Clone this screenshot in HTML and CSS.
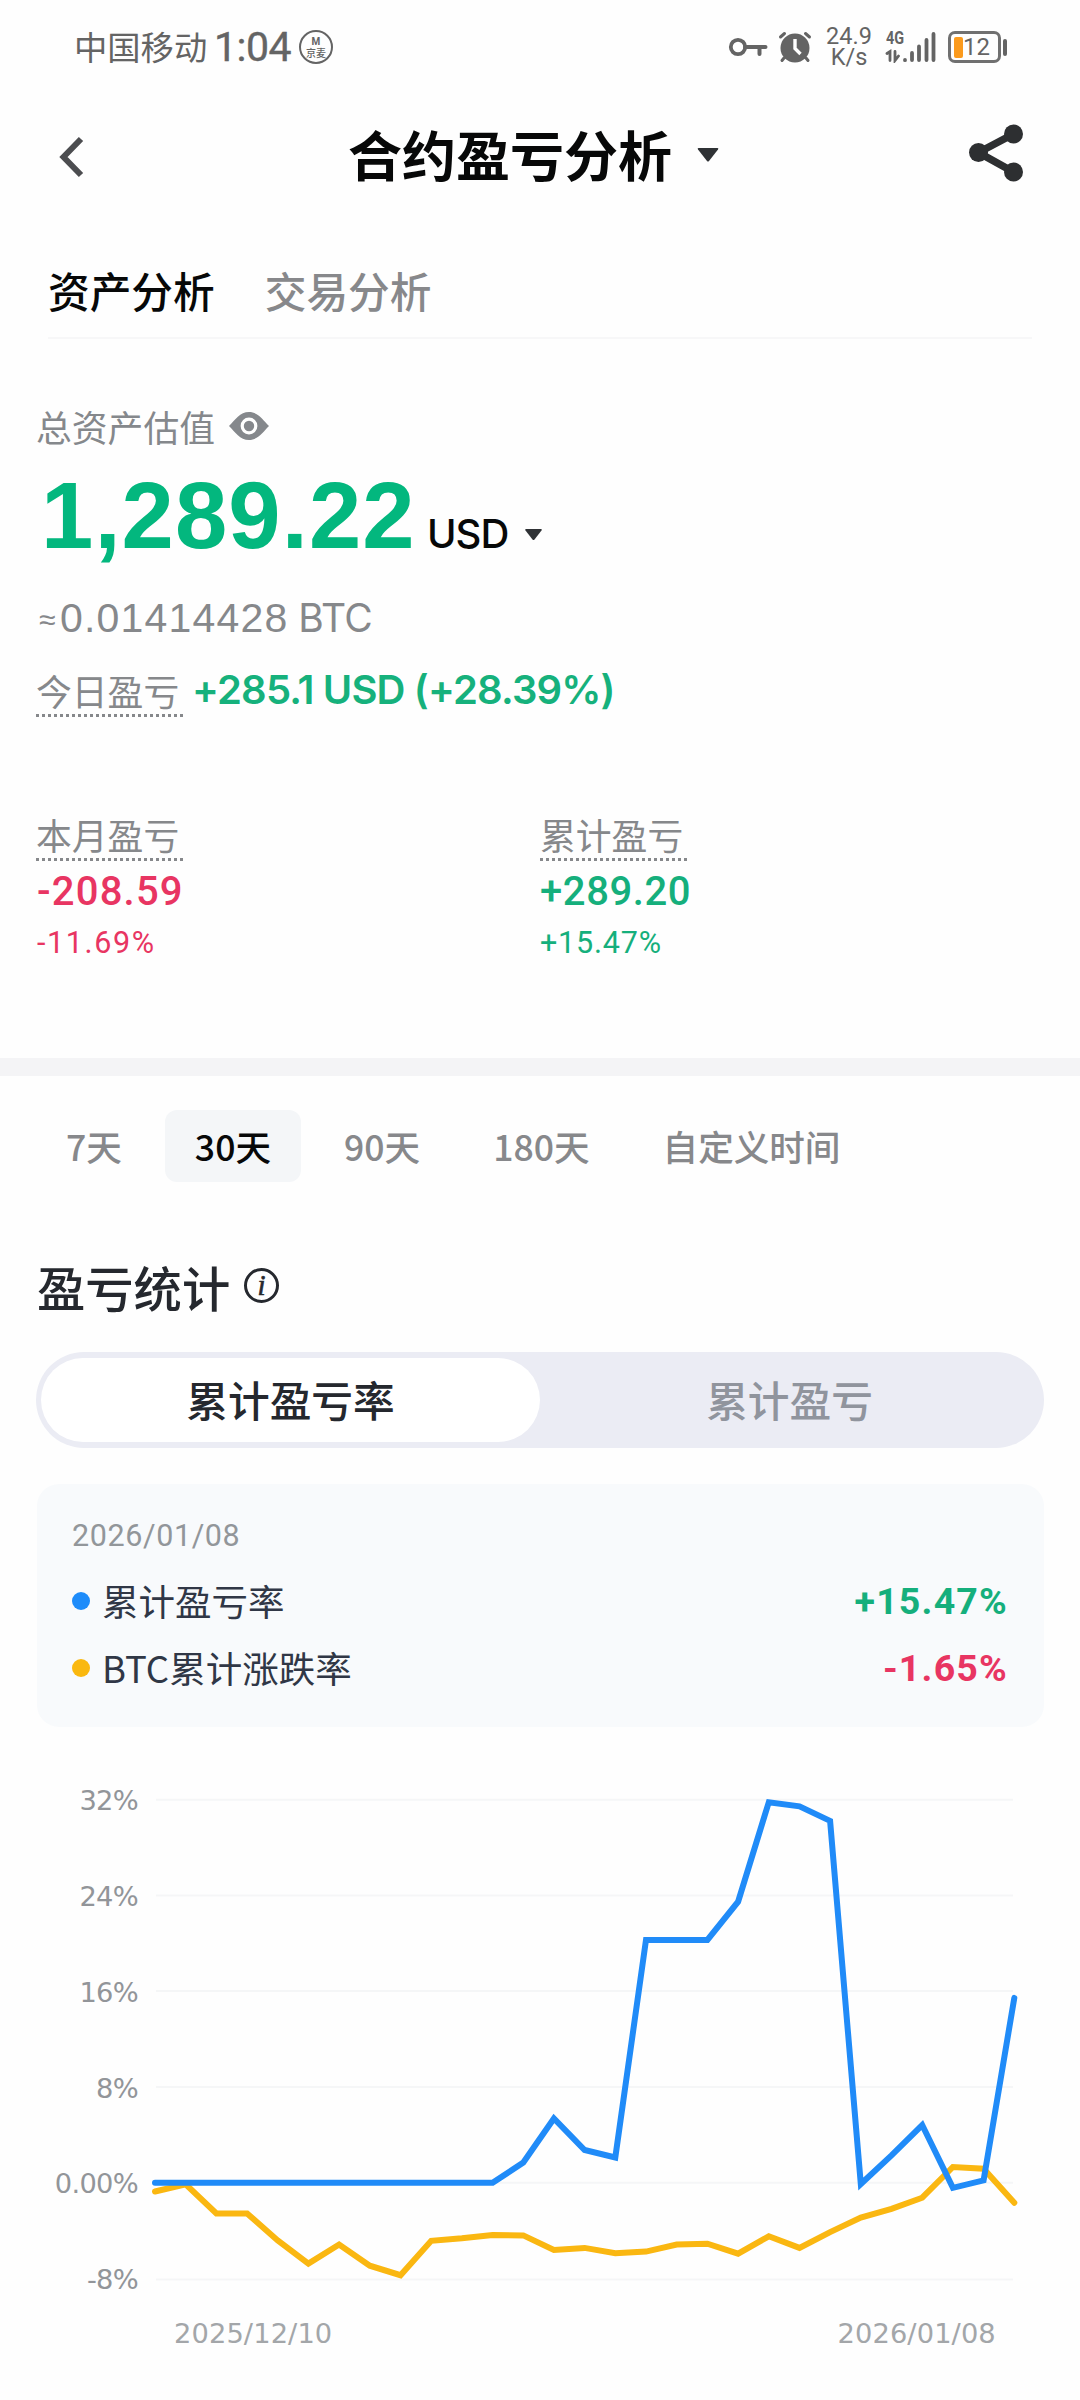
FILE: index.html
```html
<!DOCTYPE html>
<html lang="zh-CN">
<head>
<meta charset="utf-8">
<title>合约盈亏分析</title>
<link rel="stylesheet" href="styles.css">
</head>
<body>
<header class="status">
  <span class="carrier">中国移动</span>
  <span class="clock">1:04</span>
  <span class="badge"><span class="badge-top">M</span><span class="badge-name">京麦</span></span>
  <svg class="icon-key" width="40" height="22" viewBox="0 0 40 22" fill="none" stroke="#646464">
    <circle cx="10" cy="11" r="7.2" stroke-width="3.8"/>
    <path d="M17 11H37.500M31.500 11V18" stroke-width="4" stroke-linecap="round"/>
  </svg>
  <svg class="icon-alarm" width="34" height="32" viewBox="0 0 34 32">
    <circle cx="17" cy="17" r="14.500" fill="#646464"/>
    <path d="M2.500 6L6.500 2.500M31.500 6L27.500 2.500M6 27L4 29.500M28 27L30 29.500" stroke="#646464" stroke-width="3" stroke-linecap="round"/>
    <path d="M17 8V17.500L22.500 23" fill="none" stroke="#fff" stroke-width="3.400"/>
  </svg>
  <span class="speed"><span>24.9</span><span>K/s</span></span>
  <span class="network">
    <span class="network-type">4G</span>
    <svg class="icon-signal" width="52" height="32" viewBox="0 0 52 32" fill="none" stroke="#646464" stroke-width="3.800" stroke-linecap="round">
      <path d="M2 22.500L5 20.500V29.500M10 20.500V29.500L13.500 25" stroke-width="2.800"/>
      <path d="M20 29V29.200M27 22V29M34 15.500V29M41.500 9V29M48.500 3V29"/>
    </svg>
  </span>
  <span class="battery"><i class="battery-level"></i>12</span><i class="battery-cap"></i>
</header>

<nav class="topbar">
  <svg class="back" width="26" height="42" viewBox="0 0 26 42" fill="none" stroke="#4c4d50" stroke-width="6"><path d="M23 3L5.500 21L23 39"/></svg>
  <h1 class="title">合约盈亏分析</h1>
  <svg class="title-caret" width="24" height="16" viewBox="0 0 24 16"><path d="M2.500 1H21.500Q23 1 22 2.500L13 14Q12 15 11 14L2 2.500Q1 1 2.500 1Z" fill="#2f3235"/></svg>
  <svg class="share" width="56" height="58" viewBox="0 0 56 58" fill="#2d2f31"><path d="M45.500 10L10.500 28.500L45.500 48" fill="none" stroke="#2d2f31" stroke-width="7.500"/><circle cx="45.500" cy="10" r="9.500"/><circle cx="10.500" cy="28.500" r="9.500"/><circle cx="45.500" cy="48" r="9.500"/></svg>
</nav>

<div class="tabs"><span class="tab tab-on">资产分析</span><span class="tab">交易分析</span></div>

<section class="assets">
  <div class="label-row">总资产估值
    <svg class="eye" width="42" height="30" viewBox="0 0 42 30"><path d="M1 15C7 9 12 1 21 1S35 9 41 15C35 21 30 29 21 29S7 21 1 15Z" fill="#85888c"/><circle cx="21" cy="15" r="6.800" fill="#85888c" stroke="#fff" stroke-width="3.200"/></svg>
  </div>
  <div class="total"><span class="amount">1,289.22</span><span class="unit">USD</span><svg class="unit-caret" width="19" height="13" viewBox="0 0 19 13"><path d="M2 1H17Q18.500 1 17.500 2.500L10.500 11.500Q9.500 12.500 8.500 11.500L1.500 2.500Q.5 1 2 1Z" fill="#2f3235"/></svg></div>
  <div class="btc"><span class="approx">≈</span>0.01414428 <span class="coin">BTC</span></div>
  <div class="today"><span class="dotted">今日盈亏</span><span class="today-value">+285.1 USD (+28.39%)</span></div>
  <div class="stats">
    <div class="stat down"><span class="dotted">本月盈亏</span><span class="stat-value">-208.59</span><span class="stat-pct">-11.69%</span></div>
    <div class="stat up"><span class="dotted">累计盈亏</span><span class="stat-value">+289.20</span><span class="stat-pct">+15.47%</span></div>
  </div>
</section>

<div class="band"></div>

<div class="periods"><span class="period">7天</span><span class="period period-on">30天</span><span class="period">90天</span><span class="period">180天</span><span class="period">自定义时间</span></div>

<div class="section-head"><h2 class="section-title">盈亏统计</h2><span class="info">i</span></div>

<div class="segment"><span class="seg seg-on">累计盈亏率</span><span class="seg">累计盈亏</span></div>

<section class="panel">
  <div class="panel-date">2026/01/08</div>
  <div class="legend"><i class="dot dot-blue"></i>累计盈亏率<b class="legend-value up">+15.47%</b></div>
  <div class="legend"><i class="dot dot-gold"></i>BTC累计涨跌率<b class="legend-value down">-1.65%</b></div>
</section>

<svg class="chart" width="1080" height="673" viewBox="0 -23 1080 673">
  <path class="grid" d="M156 49.800H1013M156 145.500H1013M156 241H1013M156 337H1013M156 432.800H1013M156 529.400H1013"/>
  <g class="axis-y">
    <text x="138" y="60">32%</text><text x="138" y="156">24%</text><text x="138" y="252">16%</text><text x="138" y="348">8%</text><text x="138" y="443">0.00%</text><text x="138" y="539">-8%</text>
  </g>
  <g class="axis-x"><text x="174" y="593">2025/12/10</text><text x="837.500" y="593">2026/01/08</text></g>
  <polyline class="line line-gold" points="155,441.500 185.700,434.400 216.400,463.500 247.100,463.500 277.700,490.400 308.400,513.600 339.100,494.500 369.800,515.700 400.500,525.200 431.200,490.800 461.900,488.300 492.600,485 523.300,485.400 553.900,499.900 584.600,497.900 615.300,503.300 646,501.600 676.700,494.500 707.400,493.700 738.100,503.700 768.800,486.300 799.500,497.900 830.100,482.100 860.800,467.600 891.500,458.900 922.200,447.700 952.900,417 983.600,418.700 1014.300,452.700"/>
  <polyline class="line line-blue" points="155,432.800 492.600,432.800 523.300,412.500 553.900,368.500 584.600,400 615.300,407.500 646,189.900 707.400,189.900 738.100,151.700 768.800,52.200 799.500,56.400 830.100,70.900 860.800,434 891.500,405.400 922.200,375 952.900,437.800 983.600,430.300 1014.300,247.900"/>
</svg>
</body>
</html>
```
FILE: styles.css
```css
* { box-sizing: border-box; }
body { margin: 0; width: 1080px; height: 2400px; overflow: hidden; background: #fefefe; color: #070808; font-family: "Noto Sans CJK SC", sans-serif; }
svg { display: block; flex: none; }
i { font-style: normal; }

.status { display: flex; align-items: center; height: 94px; padding-left: 74px; color: #646464; white-space: nowrap; }
.carrier { width: 140px; font-size: 33.3px; line-height: 46px; margin-top: -2px; }
.clock { width: 85px; font: 400 41px/46px Roboto, sans-serif; letter-spacing: -.5px; -webkit-text-stroke: .4px #646464; }
.badge { display: flex; flex-direction: column; align-items: center; justify-content: center; width: 34px; height: 34px; border: 2px solid #646464; border-radius: 50%; }
.badge-top { font: 700 10px/10px Roboto, sans-serif; }
.badge-name { font-size: 10px; line-height: 11px; font-weight: 500; }
.icon-key { margin-left: 395px; }
.icon-alarm { margin-left: 10px; }
.speed { display: flex; flex-direction: column; width: 48px; margin-left: 13px; font: 400 23.5px/21.5px Roboto, sans-serif; text-align: center; }
.network { position: relative; width: 52px; height: 32px; margin-left: 12px; }
.network-type { position: absolute; left: 1px; top: -2px; font: 700 18px/18px Roboto, sans-serif; transform: scaleX(.8); transform-origin: left; }
.battery { display: flex; align-items: center; width: 53px; height: 32px; margin-left: 11px; padding-left: 3px; border: 3px solid #707070; border-radius: 7px; font: 400 24px/26px Roboto, sans-serif; }
.battery-level { width: 9px; height: 21px; border-radius: 2px; background: #fb9a1c; }
.battery-cap { width: 4px; height: 17px; margin-left: 2px; border-radius: 2px; background: #646464; }

.topbar { display: flex; align-items: center; height: 116px; padding-left: 58px; }
.back { margin-top: 9px; }
.title { width: 324px; margin: 3px 0 0 264px; font-size: 54px; line-height: 76px; font-weight: 700; white-space: nowrap; }
.title-caret { margin: 5px 0 0 24px; }
.share { margin: 2px 0 0 248px; }

.tabs { display: flex; gap: 50px; height: 99px; margin: 30px 48px 0; padding: 2px 0 0; border-bottom: 2px solid #f7f7f8; }
.tab { font-size: 41.7px; line-height: 97px; color: #87888b; font-weight: 500; }
.tab-on { color: #070808; }

.assets { padding: 61px 36px 0; }
.label-row { display: flex; align-items: center; gap: 13px; height: 50px; padding-top: 1px; font-size: 35.8px; color: #85888c; }
.total { display: flex; align-items: baseline; height: 118px; }
.amount { width: 391px; padding-left: 5px; color: #03b77e; font: 700 94px/132px "Liberation Sans", sans-serif; letter-spacing: 1.1px; }
.unit { width: 97px; font: 500 40px/50px Inter, sans-serif; letter-spacing: -1px; }
.unit-caret { transform: translateY(-7px); }
.btc { margin-top: 25px; padding-left: 3px; font: 400 41px/50px "Liberation Sans", sans-serif; color: #86888b; letter-spacing: 1.2px; }
.approx { display: inline-block; width: 21px; font-size: 30px; transform: translateY(-2px); }
.coin { margin-left: -3px; font-family: Inter, sans-serif; font-size: 39px; letter-spacing: -.6px; }
.today { display: flex; gap: 9px; margin-top: 19px; }
.dotted { display: block; width: 147px; height: 51px; border-bottom: 3px dotted #86888b; font-size: 35.8px; line-height: 48px; color: #86888b; }
.today-value { font: 600 40px/48px Inter, sans-serif; letter-spacing: -.85px; color: #16b17c; white-space: nowrap; }
.stats { display: flex; margin-top: 93px; }
.stat { display: flex; flex-direction: column; width: 504px; }
.up { color: #15af7c; }
.down { color: #e83562; }
.stat-value { margin-top: 6px; font: 500 40px/50px Roboto, sans-serif; letter-spacing: .6px; }
.down .stat-value { letter-spacing: 1.2px; padding-left: 1px; }
.stat-pct { margin-top: 4px; font: 400 30.5px/44px Roboto, sans-serif; letter-spacing: .8px; }
.down .stat-pct { letter-spacing: 1.6px; padding-left: 1px; }

.band { height: 18px; margin-top: 93px; background: #f4f4f6; }

.periods { display: flex; gap: 13px; padding: 34px 36px 0; }
.period { padding: 0 30px; border-radius: 12px; font-size: 35.6px; line-height: 72px; font-weight: 500; color: #87888b; white-space: nowrap; }
.period-on { background: #f4f6f8; color: #070808; }

.section-head { display: flex; align-items: center; height: 60px; margin-top: 74px; padding-left: 37px; }
.section-title { width: 207px; margin: 0; font-size: 48.3px; line-height: 60px; font-weight: 500; color: #25282e; }
.info { width: 35px; height: 35px; margin-top: -2px; border: 3px solid #25282e; border-radius: 50%; font: italic 400 29px/28px "Liberation Serif", serif; text-align: center; color: #25282e; -webkit-text-stroke: .6px #25282e; }

.segment { display: flex; height: 96px; margin: 36px 36px 0 36px; padding: 6px 5px; border-radius: 48px; background: #ebecf4; }
.seg { flex: 1; border-radius: 42px; font-size: 41.7px; line-height: 82px; text-align: center; font-weight: 500; color: #90949d; }
.seg-on { background: #fff; color: #25282e; }

.panel { height: 243px; margin: 36px 36px 0 37px; padding: 30px 36px 0 35px; border-radius: 22px; background: #f8fafc; }
.panel-date { height: 53px; font: 400 30.5px/44px Roboto, sans-serif; letter-spacing: .6px; color: #92969a; }
.legend { display: flex; align-items: center; height: 67px; font-size: 36.5px; color: #303746; }
.dot { width: 18px; height: 18px; margin-right: 12px; border-radius: 50%; }
.dot-blue { background: #1e8cfa; }
.dot-gold { background: #fab80f; }
.legend-value { margin-left: auto; font: 700 37.5px/44px Roboto, sans-serif; letter-spacing: 1.2px; }

.chart text { font-family: "DejaVu Sans", sans-serif; font-size: 27.3px; }
.grid { fill: none; stroke: #f5f6f7; stroke-width: 2; }
.axis-y { fill: #929599; text-anchor: end; letter-spacing: -.7px; }
.axis-x { fill: #a3a6a9; letter-spacing: .1px; }
.line { fill: none; stroke-width: 6; stroke-linecap: round; stroke-linejoin: miter; }
.line-gold { stroke: #fab711; }
.line-blue { stroke: #208bf8; }
```
